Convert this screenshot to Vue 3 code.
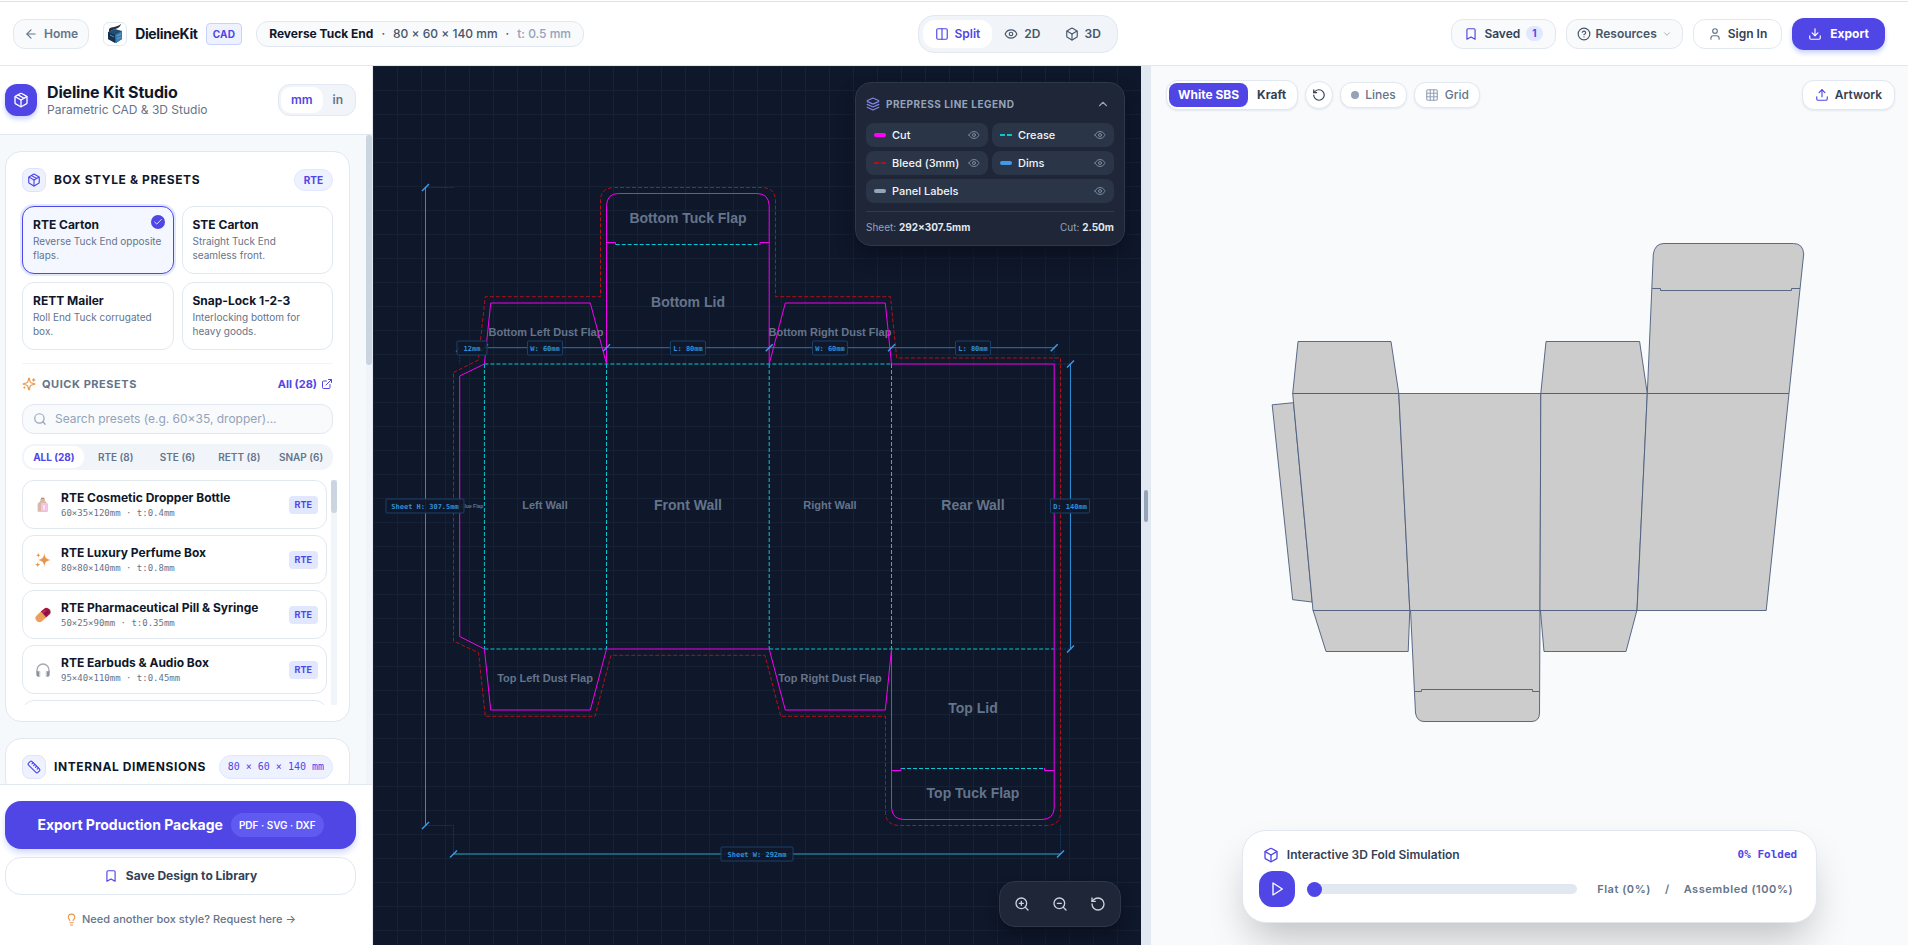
<script setup>
import { h, ref } from 'vue'

const cube = '<path d="M21 8a2 2 0 0 0-1-1.73l-7-4a2 2 0 0 0-2 0l-7 4A2 2 0 0 0 3 8v8a2 2 0 0 0 1 1.73l7 4a2 2 0 0 0 2 0l7-4A2 2 0 0 0 21 16Z"/><path d="m3.3 7 8.7 5 8.7-5"/><path d="M12 22V12"/>'
const icons = {
  back: '<path d="m12 19-7-7 7-7"/><path d="M19 12H5"/>',
  box: cube,
  package: cube + '<path d="m7.5 4.27 9 5.15"/>',
  columns: '<rect width="18" height="18" x="3" y="3" rx="2"/><path d="M12 3v18"/>',
  eye: '<path d="M2 12s3-7 10-7 10 7 10 7-3 7-10 7-10-7-10-7Z"/><circle cx="12" cy="12" r="3"/>',
  bookmark: '<path d="m19 21-7-4-7 4V5a2 2 0 0 1 2-2h10a2 2 0 0 1 2 2v16z"/>',
  help: '<circle cx="12" cy="12" r="10"/><path d="M9.09 9a3 3 0 0 1 5.83 1c0 2-3 3-3 3"/><path d="M12 17h.01"/>',
  down: '<path d="m6 9 6 6 6-6"/>',
  up: '<path d="m18 15-6-6-6 6"/>',
  user: '<path d="M19 21v-2a4 4 0 0 0-4-4H9a4 4 0 0 0-4 4v2"/><circle cx="12" cy="7" r="4"/>',
  download: '<path d="M21 15v4a2 2 0 0 1-2 2H5a2 2 0 0 1-2-2v-4"/><path d="m7 10 5 5 5-5"/><path d="M12 15V3"/>',
  upload: '<path d="M21 15v4a2 2 0 0 1-2 2H5a2 2 0 0 1-2-2v-4"/><path d="m17 8-5-5-5 5"/><path d="M12 3v12"/>',
  reset: '<path d="M3 12a9 9 0 1 0 9-9 9.75 9.75 0 0 0-6.74 2.74L3 8"/><path d="M3 3v5h5"/>',
  grid: '<rect width="18" height="18" x="3" y="3" rx="2"/><path d="M3 9h18M3 15h18M9 3v18M15 3v18"/>',
  external: '<path d="M15 3h6v6"/><path d="M10 14 21 3"/><path d="M18 13v6a2 2 0 0 1-2 2H5a2 2 0 0 1-2-2V8a2 2 0 0 1 2-2h6"/>',
  search: '<circle cx="11" cy="11" r="8"/><path d="m21 21-4.3-4.3"/>',
  zoomIn: '<circle cx="11" cy="11" r="8"/><path d="m21 21-4.3-4.3M11 8v6M8 11h6"/>',
  zoomOut: '<circle cx="11" cy="11" r="8"/><path d="m21 21-4.3-4.3M8 11h6"/>',
  ruler: '<path d="M21.3 15.3a2.4 2.4 0 0 1 0 3.4l-2.6 2.6a2.4 2.4 0 0 1-3.4 0L2.7 8.7a2.41 2.41 0 0 1 0-3.4l2.6-2.6a2.41 2.41 0 0 1 3.4 0Z"/><path d="m14.5 12.5 2-2m-5-1 2-2m-5-1 2-2m7 11 2-2"/>',
  layers: '<path d="m12.83 2.18a2 2 0 0 0-1.66 0L2.6 6.08a1 1 0 0 0 0 1.83l8.58 3.91a2 2 0 0 0 1.66 0l8.58-3.9a1 1 0 0 0 0-1.83Z"/><path d="m22 17.65-9.17 4.16a2 2 0 0 1-1.66 0L2 17.65"/><path d="m22 12.65-9.17 4.16a2 2 0 0 1-1.66 0L2 12.65"/>',
  bulb: '<path d="M15 14c.2-1 .7-1.7 1.5-2.5 1-.9 1.5-2.2 1.5-3.5A6 6 0 0 0 6 8c0 1 .2 2.2 1.5 3.5.7.7 1.3 1.5 1.5 2.5"/><path d="M9 18h6M10 22h4"/>',
  play: '<path d="M6 3 20 12 6 21Z"/>',
  check: '<path d="M20 6 9 17l-5-5"/>',
  sparkles: '<path d="M9.937 15.5A2 2 0 0 0 8.5 14.063l-6.135-1.582a.5.5 0 0 1 0-.962L8.5 9.936A2 2 0 0 0 9.937 8.5l1.582-6.135a.5.5 0 0 1 .963 0L14.063 8.5A2 2 0 0 0 15.5 9.937l6.135 1.581a.5.5 0 0 1 0 .964L15.5 14.063a2 2 0 0 0-1.437 1.437l-1.582 6.135a.5.5 0 0 1-.963 0z"/><path d="M20 3v4M22 5h-4M4 17v2M5 18H3"/>',
}
const Icon = (p) =>
  h('svg', {
    width: p.size || 14,
    height: p.size || 14,
    viewBox: '0 0 24 24',
    fill: 'none',
    stroke: 'currentColor',
    'stroke-width': 2,
    'stroke-linecap': 'round',
    'stroke-linejoin': 'round',
    'aria-hidden': 'true',
    innerHTML: icons[p.name],
  })
Icon.props = ['name', 'size']

const pictures = {
  bottle: '<path fill="#b98d78" d="M9 1h5v3H9z"/><path fill="#d9b8a8" d="M8 3h7v3l4 4v12H4V10l4-4z"/><path fill="#f3c4e0" d="M9 9h9v12H9z"/><path fill="#fbe3f2" d="M12 12h3v7h-3z"/>',
  stars: '<path fill="#e8964a" d="M14 2c1 7 3 9 10 10-7 1-9 3-10 10-1-7-3-9-10-10 7-1 9-3 10-10Z"/><path fill="#e8964a" d="M5 1c.4 2.5 1.2 3.3 3.5 3.7C6.200 5.100 5.400 6 5 8.500 4.600 6 3.800 5.100 1.500 4.700 3.800 4.300 4.600 3.500 5 1ZM4 15c.5 2.700 1.300 3.500 4 4-2.700.5-3.500 1.300-4 4-.5-2.700-1.300-3.500-4-4 2.700-.5 3.500-1.300 4-4Z"/>',
  pill: '<g transform="rotate(-42 12 12)"><path fill="#e8a05c" d="M5 6h8v12H5a6 6 0 0 1 0-12Z"/><path fill="#a3173f" d="M13 6h6a6 6 0 0 1 0 12h-6Z"/><path fill="#d1305f" d="M14 8h5v2h-5z"/><path fill="#7d0f5c" d="M14 12h7v3h-7z"/></g>',
  headphones: '<path fill="none" stroke="#a3a8b3" stroke-width="2" d="M3 15v-3a9 9 0 0 1 18 0v3"/><path fill="#8b919e" d="M2 14h5v8H4l-2-2zM17 14h5v6l-2 2h-3z"/><path fill="#c9cdd6" d="M6 14h2v8H6zM16 14h2v8h-2z"/>',
}

const unit = ref('mm')
const view = ref('Split')
const fold = ref(0)
const query = ref('')

const styles = [
  { name: 'RTE Carton', text: 'Reverse Tuck End opposite flaps.', on: true },
  { name: 'STE Carton', text: 'Straight Tuck End seamless front.' },
  { name: 'RETT Mailer', text: 'Roll End Tuck corrugated box.' },
  { name: 'Snap-Lock 1-2-3', text: 'Interlocking bottom for heavy goods.' },
]
const tabs = ['ALL (28)', 'RTE (8)', 'STE (6)', 'RETT (8)', 'SNAP (6)']
const presets = [
  { name: 'RTE Cosmetic Dropper Bottle', size: '60×35×120mm · t:0.4mm', pic: 'bottle' },
  { name: 'RTE Luxury Perfume Box', size: '80×80×140mm · t:0.8mm', pic: 'stars' },
  { name: 'RTE Pharmaceutical Pill & Syringe', size: '50×25×90mm · t:0.35mm', pic: 'pill' },
  { name: 'RTE Earbuds & Audio Box', size: '95×40×110mm · t:0.45mm', pic: 'headphones' },
]
const legend = [
  { name: 'Cut', kind: 'cut' },
  { name: 'Crease', kind: 'crease' },
  { name: 'Bleed (3mm)', kind: 'bleed' },
  { name: 'Dims', kind: 'dims' },
  { name: 'Panel Labels', kind: 'labels' },
]
const panelLabels = [
  { t: 'Bottom Tuck Flap', x: 688, y: 223, s: 14 },
  { t: 'Bottom Lid', x: 688, y: 307, s: 14 },
  { t: 'Bottom Left Dust Flap', x: 546, y: 336, s: 11 },
  { t: 'Bottom Right Dust Flap', x: 830, y: 336, s: 11 },
  { t: 'Left Wall', x: 545, y: 509, s: 11 },
  { t: 'Front Wall', x: 688, y: 510, s: 14 },
  { t: 'Right Wall', x: 830, y: 509, s: 11 },
  { t: 'Rear Wall', x: 973, y: 510, s: 14 },
  { t: 'Glue Flap', x: 472, y: 508, s: 5 },
  { t: 'Top Left Dust Flap', x: 545, y: 682, s: 11 },
  { t: 'Top Right Dust Flap', x: 830, y: 682, s: 11 },
  { t: 'Top Lid', x: 973, y: 713, s: 14 },
  { t: 'Top Tuck Flap', x: 973, y: 798, s: 14 },
]
const dimTags = [
  { t: '12mm', x: 472, y: 348, w: 30 },
  { t: 'W: 60mm', x: 545, y: 348, w: 35 },
  { t: 'L: 80mm', x: 688, y: 348, w: 35 },
  { t: 'W: 60mm', x: 830, y: 348, w: 35 },
  { t: 'L: 80mm', x: 973, y: 348, w: 35 },
  { t: 'D: 140mm', x: 1070, y: 506, w: 39 },
  { t: 'Sheet H: 307.5mm', x: 425, y: 506, w: 78 },
  { t: 'Sheet W: 292mm', x: 757, y: 854, w: 72 },
]
const ticks = [
  [425.5, 187.5], [425.5, 825.5], [453.5, 854], [1060.5, 854],
  [484.4, 347.7], [606.5, 347.7], [769.2, 347.7], [891.5, 347.7], [1054.2, 347.7],
  [1070.5, 364], [1070.5, 649],
]
</script>

<template>
  <div class="app">
    <header class="top">
      <div class="top-side">
        <a href="#" class="btn home"><Icon name="back" />Home</a>
        <div class="brand">
          <span class="logo">
            <svg width="18" height="20" viewBox="0 0 18 20" aria-hidden="true">
              <path fill="#1f4e79" d="M2 8l7-3 7 2v8l-6 4-8-4z" />
              <path fill="#16324f" d="M2 8l7 3v8l-7-4z" />
              <path fill="#3a7cae" d="M9 11l7-4v8l-6 4z" />
              <path fill="#22303f" d="M3 5c3-3 7-1 12-5-1 5-6 4-12 8z" />
              <path stroke="#79b2da" stroke-width="0.7" d="M4 11l4 2M11 12l4-2M11 15l4-2" />
            </svg>
          </span>
          <strong>DielineKit</strong>
          <span class="cad">CAD</span>
        </div>
        <div class="spec"><b>Reverse Tuck End</b><i>·</i><span>80 × 60 × 140 mm</span><i>·</i><em>t: 0.5 mm</em></div>
      </div>
      <div class="views">
        <button :class="{ on: view === 'Split' }" @click="view = 'Split'"><Icon name="columns" />Split</button>
        <button :class="{ on: view === '2D' }" @click="view = '2D'"><Icon name="eye" />2D</button>
        <button :class="{ on: view === '3D' }" @click="view = '3D'"><Icon name="box" />3D</button>
      </div>
      <div class="top-side end">
        <button class="btn saved"><Icon name="bookmark" class="indigo" />Saved<span class="count">1</span></button>
        <button class="btn res"><Icon name="help" />Resources<Icon name="down" size="10" class="pale" /></button>
        <button class="btn sign"><Icon name="user" class="slate" />Sign In</button>
        <button class="export"><Icon name="download" />Export</button>
      </div>
    </header>

    <main class="main">
      <aside class="side">
        <div class="side-head">
          <span class="side-logo"><Icon name="package" size="16" /></span>
          <div class="side-title">
            <h1>Dieline Kit Studio</h1>
            <p>Parametric CAD &amp; 3D Studio</p>
          </div>
          <div class="units">
            <button :class="{ on: unit === 'mm' }" @click="unit = 'mm'">mm</button>
            <button :class="{ on: unit === 'in' }" @click="unit = 'in'">in</button>
          </div>
        </div>

        <div class="side-scroll">
          <div class="cards">
            <section class="card">
              <div class="card-head">
                <span class="tile"><Icon name="package" /></span>
                <h2>BOX STYLE &amp; PRESETS</h2>
                <span class="pill">RTE</span>
              </div>
              <div class="styles">
                <button v-for="s in styles" :key="s.name" class="style" :class="{ on: s.on }">
                  <b>{{ s.name }}</b>
                  <span>{{ s.text }}</span>
                  <span v-if="s.on" class="tick"><Icon name="check" size="10" /></span>
                </button>
              </div>
              <div class="quick">
                <h3><Icon name="sparkles" class="amber" />QUICK PRESETS</h3>
                <a href="#">All (28)<Icon name="external" size="12" /></a>
              </div>
              <label class="search">
                <Icon name="search" />
                <input v-model="query" type="text" aria-label="Search presets" placeholder="Search presets (e.g. 60×35, dropper)..." />
              </label>
              <div class="tabs">
                <button v-for="(t, i) in tabs" :key="t" :class="{ on: i === 0 }">{{ t }}</button>
              </div>
              <div class="list">
                <div class="items">
                  <button v-for="p in presets" :key="p.name" class="item">
                    <svg width="16" height="16" viewBox="0 0 24 24" aria-hidden="true" v-html="pictures[p.pic]"></svg>
                    <span class="item-text"><b>{{ p.name }}</b><small>{{ p.size }}</small></span>
                    <span class="tag">RTE</span>
                  </button>
                  <div class="item"></div>
                </div>
                <div class="bar"><div class="bar-thumb short"></div></div>
              </div>
            </section>
            <section class="card">
              <div class="card-head">
                <span class="tile"><Icon name="ruler" /></span>
                <h2>INTERNAL DIMENSIONS</h2>
                <span class="pill mono">80 × 60 × 140 mm</span>
              </div>
            </section>
          </div>
          <div class="bar"><div class="bar-thumb"></div></div>
        </div>

        <div class="side-foot">
          <button class="primary">Export Production Package<span>PDF · SVG · DXF</span></button>
          <button class="save"><Icon name="bookmark" class="indigo" />Save Design to Library</button>
          <a href="#" class="ask"><Icon name="bulb" size="13" class="amber" />Need another box style? Request here →</a>
        </div>
      </aside>

      <section class="canvas">
        <svg class="drawing" viewBox="373 66 768 879" role="img" aria-label="Dieline drawing">
          <g font-family="'Liberation Sans', Arial, sans-serif" font-weight="700" fill="#64748b" text-anchor="middle">
            <text v-for="l in panelLabels" :key="l.t" :x="l.x" :y="l.y" :font-size="l.s">{{ l.t }}</text>
          </g>
          <path
            fill="none" stroke="#b3101a" stroke-dasharray="4 2"
            d="M453.5 372.5 478.3 360 485.3 296.7H600.5V201Q600.5 187.5 615 187.5H761Q775.5 187.5 775.5 201V296.7H890.5L896.7 358H1060.5V812Q1060.5 825.5 1046 825.5H900Q885.5 825.5 885.5 812V716.3H780.7L765 655.3H611L595 716.3H485.3L478.5 652.7 453.5 641Z"
          />
          <path
            fill="none" stroke="#06c8d0" stroke-dasharray="4 2"
            d="M484.4 364H891.5M484.4 364V649M606.5 364V649M769.2 364V649M891.5 364V649M484.4 649H606.5M769.2 649H1054.2M615.7 244.5H760M901 768.5H1045"
          />
          <path
            fill="none" stroke="#f400f4"
            d="M606.5 364 590.3 303H490.7L484.4 364 459.7 376V636.5L484.4 649 490.7 710H590.3L606.5 649H769.2L785.3 710H885.3L891.5 649V808Q892.5 819.5 904 819.5H1042Q1053.5 819.5 1054.2 808V364H891.5L885.3 303H785.3L769.2 364V205.5Q768.5 193.5 757 193.5H618.5Q607 193.5 606.5 205.5V364"
          />
          <path fill="none" stroke="#f400f4" d="M606.5 242.5H615.5V245M769.2 242.5H760V245M891.5 770.5H901V768M1054.2 770.5H1044.5V768" />
          <g fill="none" stroke="#2f8bd0">
            <path d="M425.5 187.5V825.5M1070.5 364V649" />
            <path stroke-opacity="0.8" d="M484.4 347.7H1054.2" />
            <path stroke="#1a6078" stroke-width="2" d="M453.5 854H1060.5" />
            <path stroke-opacity="0.28" stroke-dasharray="2 1" d="M425.5 187.5H454M425.5 825.5H453.5V854M1060.5 825.5V854M459.7 348V364M1054.2 348V364M1055 364H1073M1055 649H1073" />
            <path v-for="(t, i) in ticks" :key="i" stroke="#4299e1" stroke-width="1.5" :d="`M${t[0] - 3.5} ${t[1] + 3.5}l7 -7`" />
            <path stroke="#4299e1" d="M456 352 459 348" />
          </g>
          <g v-for="(d, i) in dimTags" :key="i">
            <rect :x="d.x - d.w / 2" :y="d.y - 7" :width="d.w" height="14" rx="1" fill="#0f172a" fill-opacity="0.9" stroke="#1a4068" />
            <text :x="d.x" :y="d.y + 3" text-anchor="middle" font-family="'DejaVu Sans Mono', monospace" font-weight="700" font-size="7" fill="#2f8fd6">{{ d.t }}</text>
          </g>
        </svg>

        <div class="legend">
          <button class="legend-head"><Icon name="layers" class="lilac" />PREPRESS LINE LEGEND<Icon name="up" class="push" /></button>
          <div class="rows">
            <button v-for="l in legend" :key="l.kind" class="row" :class="l.kind">
              <span class="swatch"></span>{{ l.name }}<Icon name="eye" size="12" class="push" />
            </button>
          </div>
          <div class="totals">
            <span>Sheet: <b>292×307.5mm</b></span>
            <span>Cut: <b>2.50m</b></span>
          </div>
        </div>

        <div class="zoom">
          <button aria-label="Zoom in"><Icon name="zoomIn" size="16" /></button>
          <button aria-label="Zoom out"><Icon name="zoomOut" size="16" /></button>
          <button aria-label="Reset view"><Icon name="reset" size="16" /></button>
        </div>
      </section>

      <div class="divider"><span></span></div>

      <section class="preview">
        <svg class="drawing" viewBox="1151 66 757 879" role="img" aria-label="3D preview">
          <g fill="#cccccc" stroke="#4a5b7c" stroke-width="0.9" stroke-linejoin="round">
            <path d="M1272.2 404.8 1293.5 402.7 1312.2 602 1292.7 599.7Z" />
            <path d="M1292.7 393.5 1298 341.5H1391L1398.8 393.5Z" />
            <path d="M1540.8 393.5 1546 341.5H1639.6L1647.3 393.5Z" />
            <path d="M1647.3 393.5 1653.3 254Q1655 243.5 1664 243.5H1793.5Q1803 243.5 1803.7 254L1789 393.5Z" />
            <path d="M1313 610 1326 651.5H1408.2L1409.8 610Z" />
            <path d="M1540.4 610 1544 651.5H1626L1637 610Z" />
            <path d="M1410.5 610 1415.5 713Q1417 721.5 1424 721.5H1532Q1539.5 721 1539.5 713L1540 610Z" />
            <path d="M1292.7 393.5H1398.8L1409.8 610.5H1313Z" />
            <path d="M1398.8 393.5H1540.8L1540 610.5H1409.8Z" />
            <path d="M1540.8 393.5H1647.3L1637 610.5H1540Z" />
            <path d="M1647.3 393.5H1789L1766.2 610.5H1637Z" />
            <path fill="none" d="M1652.2 288.5H1660.5V290.5H1791.5V288.5H1800M1414.7 691.5H1421.5V689.5H1532.5V691.5H1539.5" />
          </g>
        </svg>

        <div class="tools">
          <div class="stock"><button class="on">White SBS</button><button>Kraft</button></div>
          <button class="btn round" aria-label="Reset camera"><Icon name="reset" /></button>
          <button class="btn small"><span class="dot"></span>Lines</button>
          <button class="btn small"><Icon name="grid" class="pale" />Grid</button>
          <button class="btn art"><Icon name="upload" class="indigo" />Artwork</button>
        </div>

        <div class="fold">
          <div class="fold-head">
            <Icon name="box" size="16" class="indigo" /><label for="fold">Interactive 3D Fold Simulation</label>
            <output for="fold">{{ fold }}% Folded</output>
          </div>
          <div class="fold-row">
            <button class="play" aria-label="Play"><Icon name="play" size="16" /></button>
            <input id="fold" v-model="fold" type="range" min="0" max="100" />
            <div class="fold-text"><span>Flat (0%)</span><span>/</span><span>Assembled (100%)</span></div>
          </div>
        </div>
      </section>
    </main>
  </div>
</template>

<style>
body {
  background: #fff;
}
</style>

<style scoped>
* {
  box-sizing: border-box;
}
.app {
  display: flex;
  flex-direction: column;
  height: 100vh;
  overflow: hidden;
  font-family: Inter, 'Liberation Sans', sans-serif;
  font-size: 12px;
  line-height: 16px;
  color: #0f172a;
}
button {
  font: inherit;
  color: inherit;
  border: 0;
  background: none;
  padding: 0;
  cursor: pointer;
}
a {
  text-decoration: none;
  color: inherit;
}
h1, h2, h3, p {
  margin: 0;
}
svg {
  flex: none;
}
.indigo { color: #4f46e5; }
.pale { color: #94a3b8; }
.slate { color: #64748b; }
.amber { color: #e8964a; }
.lilac { color: #8286e8; }
.push { margin-left: auto; }

.top {
  display: flex;
  align-items: center;
  justify-content: space-between;
  height: 66px;
  flex: none;
  padding: 2px 23px 0 13px;
  border-bottom: 1px solid #e2e8f0;
  box-shadow: inset 0 1px #fff, inset 0 2px #dfe3e8;
}
.top-side {
  display: flex;
  align-items: center;
}
.end {
  gap: 10px;
}
.btn {
  display: flex;
  align-items: center;
  height: 30px;
  border: 1px solid #e2e8f0;
  border-radius: 12px;
  background: #fff;
  font-weight: 600;
  color: #334155;
}
.home {
  gap: 6px;
  padding: 0 10px;
  margin-right: 14px;
  background: #f8fafc;
  color: #64748b;
}
.brand {
  display: flex;
  align-items: center;
  gap: 8px;
  margin-right: 14px;
}
.brand strong {
  font-size: 14px;
  letter-spacing: -0.025em;
}
.logo {
  display: grid;
  place-items: center;
  width: 24px;
  height: 24px;
  border: 1px solid #e2e8f0;
  border-radius: 6px;
}
.cad {
  padding: 2px 6px;
  border: 1px solid #c7d2fe;
  border-radius: 4px;
  background: #eef2ff;
  font-size: 10px;
  font-weight: 700;
  letter-spacing: 0.025em;
  color: #4f46e5;
}
.spec {
  display: flex;
  align-items: center;
  gap: 8px;
  height: 26px;
  padding: 0 12px;
  border: 1px solid #e2e8f0;
  border-radius: 12px;
  background: #f8fafc;
  font-weight: 500;
  color: #475569;
}
.spec b {
  font-weight: 700;
  color: #0f172a;
}
.spec i, .spec em {
  font-style: normal;
}
.spec em {
  color: #94a3b8;
}
.views {
  display: flex;
  padding: 4px;
  border: 1px solid #e2e8f0;
  border-radius: 16px;
  background: #f1f5f9;
}
.views button {
  display: flex;
  align-items: center;
  gap: 6px;
  height: 28px;
  padding: 0 12px;
  border-radius: 12px;
  font-weight: 600;
  color: #475569;
}
.views .on {
  background: #fff;
  color: #4f46e5;
}
.saved {
  gap: 6px;
  padding: 0 12px;
  background: #f8fafc;
}
.count {
  padding: 0 6px;
  border-radius: 8px;
  background: #e0e7ff;
  font-size: 10px;
  line-height: 15px;
  font-weight: 700;
  color: #4f46e5;
}
.res {
  gap: 5px;
  padding: 0 10px;
  background: #f8fafc;
  color: #475569;
}
.sign {
  gap: 6px;
  padding: 0 14px;
}
.export {
  display: flex;
  align-items: center;
  gap: 8px;
  height: 32px;
  padding: 0 16px;
  border-radius: 12px;
  background: #4f46e5;
  font-weight: 700;
  color: #fff;
  box-shadow: 0 3px 5px #c7d2fe;
}

.main {
  flex: 1;
  min-height: 0;
  display: flex;
}
.side {
  width: 373px;
  flex: none;
  display: flex;
  flex-direction: column;
  border-right: 1px solid #e2e8f0;
}
.side-head {
  display: flex;
  align-items: center;
  height: 69px;
  flex: none;
  padding: 0 16px 0 5px;
  border-bottom: 1px solid #e2e8f0;
}
.side-logo {
  display: grid;
  place-items: center;
  width: 32px;
  height: 32px;
  margin-right: 10px;
  border-radius: 12px;
  background: #4f46e5;
  color: #fff;
  box-shadow: 0 3px 5px #c7d2fe;
}
.side-title {
  flex: 1;
}
.side-title h1 {
  font-size: 16px;
  line-height: 20px;
  font-weight: 700;
  letter-spacing: -0.01em;
}
.side-title p {
  color: #64748b;
}
.units {
  display: flex;
  padding: 2px;
  border: 1px solid #e2e8f0;
  border-radius: 12px;
  background: #f1f5f9;
}
.units button {
  height: 26px;
  padding: 0 10px;
  border-radius: 10px;
  font-weight: 600;
  color: #64748b;
}
.units .on {
  background: #fff;
  color: #4f46e5;
}
.side-scroll {
  flex: 1;
  min-height: 0;
  display: flex;
  background: #f6f9fc;
}
.cards {
  flex: 1;
  display: flex;
  flex-direction: column;
  gap: 16px;
  padding: 16px 16px 0 5px;
  overflow: hidden;
}
.bar {
  width: 6px;
  flex: none;
  background: #f1f5f9;
}
.bar-thumb {
  height: 230px;
  border-radius: 3px;
  background: #cbd5e1;
}
.bar-thumb.short {
  height: 33px;
}
.card {
  flex: none;
  padding: 16px;
  border: 1px solid #e2e8f0;
  border-radius: 16px;
  background: #fff;
}
.card-head {
  display: flex;
  align-items: center;
  gap: 8px;
}
.card-head h2 {
  flex: 1;
  font-size: 12px;
  font-weight: 700;
  letter-spacing: 0.05em;
  white-space: nowrap;
}
.tile {
  display: grid;
  place-items: center;
  width: 24px;
  height: 24px;
  border: 1px solid #dde3fd;
  border-radius: 8px;
  background: #eef2ff;
  color: #4f46e5;
}
.pill {
  padding: 2px 9px;
  border: 1px solid #e0e7ff;
  border-radius: 12px;
  background: #eef2ff;
  font-size: 10px;
  font-weight: 700;
  color: #4f46e5;
}
.pill.mono {
  padding: 3px 8px;
  font-family: 'DejaVu Sans Mono', monospace;
  font-weight: 400;
}
.styles {
  display: grid;
  grid-template-columns: 1fr 1fr;
  gap: 8px;
  margin-top: 14px;
  padding-bottom: 13px;
  border-bottom: 1px solid #f1f5f9;
}
.style {
  position: relative;
  padding: 9px 10px 11px;
  height: 68px;
  border: 1px solid #e2e8f0;
  border-radius: 12px;
  background: #fff;
  text-align: left;
}
.style b {
  display: block;
  font-weight: 700;
}
.style span {
  display: block;
  margin-top: 1px;
  font-size: 10px;
  line-height: 14px;
  color: #64748b;
}
.style.on {
  border-color: #4f46e5;
  background: #f4f7ff;
  box-shadow: 0 0 0 2px #e0e7ff;
}
.style .tick {
  position: absolute;
  top: 8px;
  right: 8px;
  display: grid;
  place-items: center;
  width: 14px;
  height: 14px;
  margin: 0;
  border-radius: 7px;
  background: #4f46e5;
  color: #fff;
}
.quick {
  display: flex;
  align-items: center;
  justify-content: space-between;
  margin-top: 12px;
}
.quick h3, .quick a {
  display: flex;
  align-items: center;
  gap: 6px;
  font-size: 11px;
  font-weight: 700;
}
.quick h3 {
  letter-spacing: 0.05em;
  color: #64748b;
}
.quick a {
  gap: 4px;
  color: #4f46e5;
}
.search {
  display: flex;
  align-items: center;
  gap: 8px;
  height: 30px;
  margin-top: 12px;
  padding: 0 10px;
  border: 1px solid #e2e8f0;
  border-radius: 12px;
  background: #f8fafc;
  color: #94a3b8;
}
.search input {
  flex: 1;
  min-width: 0;
  padding: 0;
  border: 0;
  outline: 0;
  background: none;
  font: inherit;
  color: #0f172a;
}
.search input::placeholder {
  color: #94a3b8;
}
.tabs {
  display: flex;
  gap: 2px;
  margin-top: 10px;
  padding: 2px;
  border-radius: 12px;
  background: #f1f5f9;
}
.tabs button {
  flex: 1 1 0;
  min-width: 0;
  height: 22px;
  border-radius: 10px;
  font-size: 10px;
  font-weight: 600;
  white-space: nowrap;
  color: #64748b;
}
.tabs .on {
  background: #fff;
  font-weight: 700;
  color: #4f46e5;
}
.list {
  display: flex;
  gap: 4px;
  height: 225px;
  margin: 10px -4px 0 0;
  overflow: hidden;
}
.items {
  flex: 1;
  display: flex;
  flex-direction: column;
  gap: 6px;
}
.item {
  display: flex;
  align-items: center;
  flex: none;
  gap: 10px;
  height: 49px;
  padding: 0 8px 0 12px;
  border: 1px solid #e2e8f0;
  border-radius: 12px;
  background: #fff;
  text-align: left;
}
.item-text {
  flex: 1;
}
.item b {
  display: block;
  line-height: 16px;
  font-weight: 700;
}
.item small {
  display: block;
  font-family: 'DejaVu Sans Mono', monospace;
  font-size: 9px;
  line-height: 14px;
  color: #64748b;
}
.tag {
  padding: 1px 6px;
  border-radius: 4px;
  background: #e0e7ff;
  font-size: 9px;
  font-weight: 700;
  color: #4f46e5;
}
.side-foot {
  flex: none;
  display: flex;
  flex-direction: column;
  align-items: center;
  height: 161px;
  padding: 16px 16px 0 5px;
  border-top: 1px solid #e2e8f0;
  background: #fff;
}
.primary {
  display: flex;
  align-items: center;
  justify-content: center;
  gap: 8px;
  width: 100%;
  height: 48px;
  border-radius: 16px;
  background: #4f46e5;
  font-size: 14px;
  font-weight: 700;
  color: #fff;
  box-shadow: 0 4px 6px #d5dbfd;
}
.primary span {
  padding: 4px 8px;
  border-radius: 12px;
  background: #615af0;
  font-size: 10px;
  font-weight: 600;
}
.save {
  display: flex;
  align-items: center;
  justify-content: center;
  gap: 8px;
  width: 100%;
  height: 38px;
  margin-top: 8px;
  border: 1px solid #e2e8f0;
  border-radius: 16px;
  font-weight: 700;
  color: #334155;
}
.ask {
  display: flex;
  align-items: center;
  gap: 4px;
  margin-top: 16px;
  font-size: 11px;
  font-weight: 500;
  color: #64748b;
}

.canvas {
  position: relative;
  flex: 768 1 0;
  min-width: 0;
  background-color: #0f172a;
  background-image: linear-gradient(#172134 1px, transparent 1px), linear-gradient(90deg, #172134 1px, transparent 1px);
  background-size: 24px 24px;
}
.drawing {
  display: block;
  width: 100%;
  height: 100%;
}
.legend {
  position: absolute;
  top: 16px;
  right: 16px;
  width: 270px;
  padding: 12px 10px 10px;
  border: 1px solid #2d384b;
  border-radius: 16px;
  background: #1e2638;
  box-shadow: 0 10px 16px #0b1120;
  color: #94a3b8;
}
.legend-head {
  display: flex;
  align-items: center;
  gap: 6px;
  width: 100%;
  height: 18px;
  padding-right: 4px;
  font-size: 10px;
  font-weight: 700;
  letter-spacing: 0.05em;
}
.rows {
  display: grid;
  grid-template-columns: 1fr 1fr;
  gap: 4px;
  margin-top: 10px;
  padding-bottom: 8px;
  border-bottom: 1px solid #303b4e;
}
.row {
  display: flex;
  align-items: center;
  gap: 6px;
  height: 24px;
  padding: 0 8px;
  border-radius: 8px;
  background: #2b3548;
  font-size: 11px;
  font-weight: 500;
  color: #f1f5f9;
}
.row svg {
  color: #7c8aa0;
}
.row.labels {
  grid-column: span 2;
}
.swatch {
  width: 12px;
  height: 4px;
  border-radius: 2px;
  background: #94a3b8;
}
.cut .swatch { background: #f0f; }
.dims .swatch { background: #4299e8; }
.crease .swatch, .bleed .swatch {
  height: 2px;
  border-radius: 0;
  background: repeating-linear-gradient(90deg, #06c8d0 0 5px, transparent 5px 7px);
}
.bleed .swatch {
  background: repeating-linear-gradient(90deg, #b3101a 0 5px, transparent 5px 7px);
}
.totals {
  display: flex;
  justify-content: space-between;
  margin-top: 7px;
  font-size: 10px;
}
.totals b {
  font-weight: 700;
  color: #e2e8f0;
}
.zoom {
  position: absolute;
  right: 20px;
  bottom: 18px;
  display: flex;
  gap: 6px;
  padding: 6px;
  border: 1px solid #2d384b;
  border-radius: 16px;
  background: #1e2638;
  box-shadow: 0 8px 12px #0b1120;
  color: #cbd5e1;
}
.zoom button {
  display: grid;
  place-items: center;
  width: 32px;
  height: 32px;
}
.divider {
  display: grid;
  place-items: center;
  width: 10px;
  flex: none;
  background: #e2e8f0;
}
.divider span {
  width: 4px;
  height: 32px;
  border-radius: 2px;
  background: #94a3b8;
}

.preview {
  position: relative;
  flex: 757 1 0;
  min-width: 0;
  background: #f8fafc;
}
.tools {
  position: absolute;
  top: 14px;
  left: 15px;
  right: 13px;
  display: flex;
  align-items: center;
  gap: 7px;
}
.stock {
  display: flex;
  padding: 2px;
  border: 1px solid #e2e8f0;
  border-radius: 12px;
  background: #fff;
  font-weight: 700;
  color: #334155;
}
.stock, .tools .btn {
  box-shadow: 0 1px 2px #e2e8f0;
}
.stock button {
  height: 24px;
  padding: 0 9px;
  border-radius: 8px;
}
.stock .on {
  background: #4f46e5;
  color: #fff;
}
.round {
  justify-content: center;
  width: 28px;
  height: 28px;
  border-radius: 14px;
  padding: 0;
}
.small {
  gap: 6px;
  height: 26px;
  padding: 0 10px;
  font-weight: 500;
  color: #64748b;
}
.dot {
  width: 8px;
  height: 8px;
  border-radius: 4px;
  background: #94a3b8;
}
.art {
  gap: 6px;
  margin-left: auto;
  padding: 0 12px;
}
.fold {
  position: absolute;
  left: 0;
  right: 0;
  bottom: 22px;
  width: 76%;
  margin: 0 auto;
  padding: 15px 19px 15px 16px;
  border: 1px solid #e2e8f0;
  border-radius: 24px;
  background: #fff;
  box-shadow: 0 22px 40px -8px rgb(0 0 0 / 24%);
}
.fold-head {
  display: flex;
  align-items: center;
  gap: 8px;
  padding: 1px 0 0 4px;
  font-weight: 600;
  color: #334155;
}
.fold-head output {
  margin-left: auto;
  font-family: 'DejaVu Sans Mono', monospace;
  font-size: 11px;
  font-weight: 700;
  color: #4f46e5;
}
.fold-row {
  display: flex;
  align-items: center;
  gap: 12px;
  margin-top: 8px;
}
.play {
  display: grid;
  place-items: center;
  width: 36px;
  height: 36px;
  border-radius: 14px;
  background: #4f46e5;
  color: #fff;
}
.fold-row input {
  flex: 1;
  min-width: 0;
  height: 10px;
  margin: 0;
  appearance: none;
  border-radius: 5px;
  background: #e2e8f0;
}
.fold-row input::-webkit-slider-thumb {
  appearance: none;
  width: 15px;
  height: 15px;
  border-radius: 8px;
  background: #4f46e5;
}
.fold-text {
  display: flex;
  gap: 14px;
  padding: 0 4px 0 8px;
  font-size: 11px;
  font-weight: 600;
  letter-spacing: 0.05em;
  color: #64748b;
}
</style>
